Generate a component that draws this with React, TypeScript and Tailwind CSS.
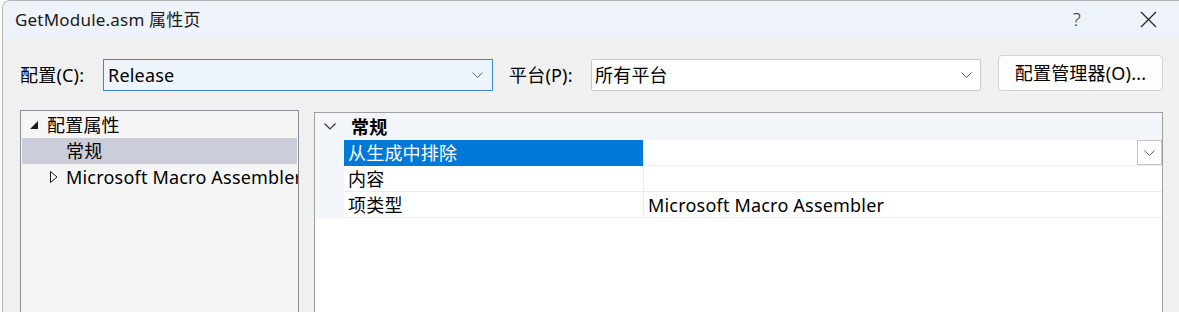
import React from 'react';

const font = { fontFamily: '"Noto Sans", "Noto Sans CJK SC", sans-serif' };

const Chevron = ({ className = '' }: { className?: string }) => (
  <svg width="11" height="6" viewBox="0 0 11 6" className={className}>
    <path d="M0.5 0.5 L5.5 5.5 L10.5 0.5" fill="none" stroke="#606060" strokeWidth="1" />
  </svg>
);

const App: React.FC = () => {
  return (
    <div className="w-[1179px] h-[312px] bg-white overflow-hidden text-[18px] tracking-[0.2px] text-black leading-none" style={font}>
      <div className="ml-[2px] h-full border-l border-t border-[#b4b4b4] rounded-tl-[8px] flex flex-col overflow-hidden">
        {/* title bar */}
        <div className="h-[37px] bg-[#eef2f9] flex items-center pl-[12px] shrink-0">
          <span className="text-[17px] text-[#1a1a1a]">GetModule.asm 属性页</span>
          <div className="ml-auto flex items-center">
            <span className="text-[19px] font-light text-[#333] mr-[59px]">?</span>
            <svg width="17" height="17" viewBox="0 0 17 17" className="mr-[22px]">
              <path d="M1 1 L16 16 M16 1 L1 16" stroke="#222" strokeWidth="1.2" />
            </svg>
          </div>
        </div>

        {/* body */}
        <div className="flex-1 bg-[#f0f0f0] flex flex-col">
          {/* toolbar */}
          <div className="flex items-end h-[36px] mt-[17px] pl-[17px]">
            <span className="w-[83px] h-[32px] flex items-center">配置(C):</span>
            <div className="w-[390px] h-[32px] border border-[#3a8ad6] bg-[#eef4fb] flex items-center pl-[4px] pr-[9px]">
              <span>Release</span>
              <Chevron className="ml-auto" />
            </div>
            <span className="ml-[16px] w-[82px] h-[32px] flex items-center">平台(P):</span>
            <div className="w-[390px] h-[32px] border border-[#c9c9c9] bg-white rounded-[2px] flex items-center pl-[3px] pr-[8px]">
              <span>所有平台</span>
              <Chevron className="ml-auto" />
            </div>
            <div className="ml-[17px] w-[165px] h-[36px] border border-[#d2d2d2] bg-[#fdfdfd] rounded-[4px] flex items-center justify-center">
              配置管理器(O)...
            </div>
          </div>

          {/* panels */}
          <div className="flex flex-1 mt-[19px] pl-[17px]">
            {/* tree */}
            <div className="w-[279px] border-l border-t border-r border-[#8d8f99] bg-[#f5f5f5] pt-[1px] pl-[1px] pr-[1px] overflow-hidden">
              <div className="h-[26px] flex items-center whitespace-nowrap">
                <svg width="10" height="10" viewBox="0 0 10 10" className="ml-[7px] mr-[8px]">
                  <path d="M9 1 L9 9 L1 9 Z" fill="#1a1a1a" />
                </svg>
                <span>配置属性</span>
              </div>
              <div className="h-[26px] flex items-center bg-[#cbcdd9] pl-[44px]">常规</div>
              <div className="h-[26px] flex items-center whitespace-nowrap">
                <svg width="8" height="12" viewBox="0 0 8 12" className="ml-[28px] mr-[8px] shrink-0">
                  <path d="M0.5 0.5 L7 6 L0.5 11.5 Z" fill="none" stroke="#1a1a1a" strokeWidth="1" />
                </svg>
                <span>Microsoft Macro Assembler</span>
              </div>
            </div>

            {/* property grid */}
            <div className="ml-[15px] mt-[2px] w-[849px] border-l border-t border-r border-[#a0a0a0] bg-white overflow-hidden">
              <div className="h-[27px] bg-[#f2f5fa] flex items-center">
                <svg width="12" height="7" viewBox="0 0 12 7" className="ml-[9px] mr-[15px]">
                  <path d="M0.5 0.5 L6 6 L11.5 0.5" fill="none" stroke="#333" strokeWidth="1.2" />
                </svg>
                <span className="font-bold">常规</span>
              </div>
              {[
                { name: '从生成中排除', value: '', selected: true, dropdown: true },
                { name: '内容', value: '', selected: false, dropdown: false },
                { name: '项类型', value: 'Microsoft Macro Assembler', selected: false, dropdown: false },
              ].map((row) => (
                <div key={row.name} className="flex h-[26px]">
                  <div className="w-[29px] bg-[#f2f5fa] shrink-0" />
                  <div
                    className={
                      row.selected
                        ? 'w-[299px] shrink-0 bg-[#0078d7] text-white flex items-center pl-[4px]'
                        : 'w-[299px] shrink-0 border-b border-[#ececec] flex items-center pl-[4px]'
                    }
                  >
                    {row.name}
                  </div>
                  <div className="flex-1 border-l border-b border-[#ececec] flex items-center pl-[4px]">
                    <span>{row.value}</span>
                    {row.dropdown && (
                      <div className="ml-auto w-[25px] h-[25px] border border-[#c4c4c4] bg-white flex items-center justify-center">
                        <Chevron />
                      </div>
                    )}
                  </div>
                </div>
              ))}
            </div>
          </div>
        </div>
      </div>
    </div>
  );
};

export default App;
